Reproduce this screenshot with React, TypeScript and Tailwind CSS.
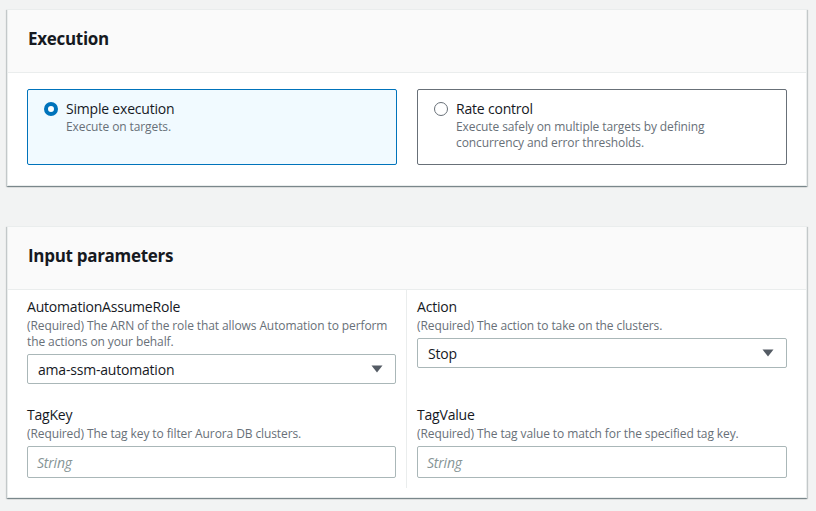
const cardShadow =
  "shadow-[0_1px_1px_0_rgba(0,28,36,0.3),1px_1px_1px_0_rgba(0,28,36,0.15),-1px_1px_1px_0_rgba(0,28,36,0.15)]";

function Caret() {
  return (
    <svg width="12" height="8" viewBox="0 0 12 8" className="shrink-0">
      <path d="M0.5 0.5 H11.5 L6 7.5 Z" fill="#545b64" />
    </svg>
  );
}

function Radio({ checked }: { checked: boolean }) {
  return checked ? (
    <span className="mt-[3px] block h-[14px] w-[14px] shrink-0 rounded-full border-[4px] border-[#0073bb] bg-white" />
  ) : (
    <span className="mt-[3px] block h-[14px] w-[14px] shrink-0 rounded-full border-[1.5px] border-[#687078] bg-white" />
  );
}

function Tile({
  title,
  desc,
  checked,
}: {
  title: string;
  desc: string;
  checked: boolean;
}) {
  return (
    <div
      className={
        checked
          ? "flex gap-2 rounded-[2px] border border-[#0073bb] bg-[#f1faff] pl-4 pr-4 pt-[9px] pb-[13px]"
          : "flex gap-2 rounded-[2px] border border-[#687078] bg-white pl-4 pr-4 pt-[9px] pb-[13px]"
      }
    >
      <Radio checked={checked} />
      <div>
        <div className="text-[14px] leading-5 tracking-[-0.2px] text-[#16191f]">{title}</div>
        <div className="max-w-[290px] text-[12px] leading-4 tracking-[-0.1px] text-[#687078]">
          {desc}
        </div>
      </div>
    </div>
  );
}

function Field({
  label,
  desc,
  children,
  className = "",
}: {
  label: string;
  desc: string;
  children: React.ReactNode;
  className?: string;
}) {
  return (
    <div className={className}>
      <div className="text-[14px] leading-5 tracking-[-0.2px] text-[#16191f]">{label}</div>
      <div className="mt-px text-[12px] leading-4 tracking-[-0.1px] text-[#687078]">{desc}</div>
      <div className="mt-1">{children}</div>
    </div>
  );
}

function Select({ value }: { value: string }) {
  return (
    <div className="flex h-[30px] items-center justify-between rounded-[2px] border border-[#aab7b8] bg-white pl-[10px] pr-3 text-[14px] tracking-[-0.2px] text-[#16191f]">
      <span>{value}</span>
      <Caret />
    </div>
  );
}

function TextInput() {
  return (
    <div className="flex h-[32px] items-center rounded-[2px] border border-[#aab7b8] bg-white px-[9px] text-[14px] italic tracking-[-0.2px] text-[#879596]">
      String
    </div>
  );
}

function Card({ title, children }: { title: string; children: React.ReactNode }) {
  return (
    <section className={`w-[800px] border border-[#eaeded] bg-white ${cardShadow}`}>
      <div className="flex h-[63px] items-center border-b border-[#eaeded] bg-[#fafafa] px-5 pb-[5px]">
        <h2 className="text-[17px] font-bold tracking-[-0.3px] text-[#16191f]">{title}</h2>
      </div>
      {children}
    </section>
  );
}

export default function App() {
  return (
    <div
      className="min-h-[511px] bg-[#f2f3f3] pl-[7px] pt-[9px]"
      style={{ fontFamily: '"Open Sans", "Noto Sans", sans-serif' }}
    >
      <Card title="Execution">
        <div className="grid grid-cols-2 gap-5 px-[19px] pt-4 pb-5">
          <Tile title="Simple execution" desc="Execute on targets." checked />
          <Tile
            title="Rate control"
            desc="Execute safely on multiple targets by defining concurrency and error thresholds."
            checked={false}
          />
        </div>
      </Card>

      <div className="mt-[40px]">
        <Card title="Input parameters">
          <div className="grid grid-cols-2 px-[19px] pb-[9px]">
            <div className="border-r border-[#eaeded] pr-[10px] pt-[7px] pb-[10px]">
              <Field
                className="h-[108px]"
                label="AutomationAssumeRole"
                desc="(Required) The ARN of the role that allows Automation to perform the actions on your behalf."
              >
                <Select value="ama-ssm-automation" />
              </Field>
              <Field label="TagKey" desc="(Required) The tag key to filter Aurora DB clusters.">
                <TextInput />
              </Field>
            </div>
            <div className="pl-[10px] pt-[7px] pb-[10px]">
              <Field
                className="h-[108px]"
                label="Action"
                desc="(Required) The action to take on the clusters."
              >
                <Select value="Stop" />
              </Field>
              <Field
                label="TagValue"
                desc="(Required) The tag value to match for the specified tag key."
              >
                <TextInput />
              </Field>
            </div>
          </div>
        </Card>
      </div>
    </div>
  );
}
